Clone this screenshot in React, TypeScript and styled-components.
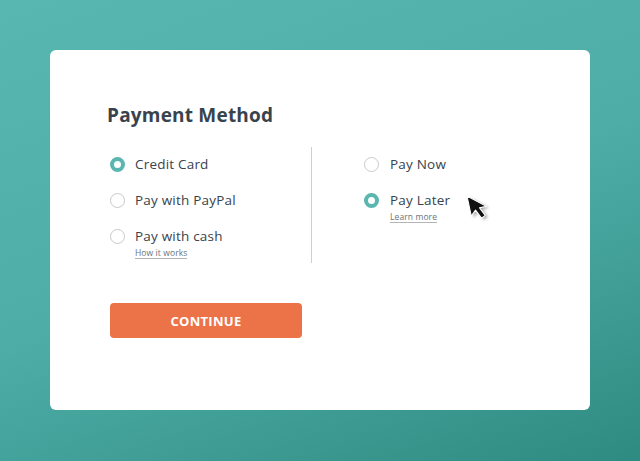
import React from "react";
import styled, { createGlobalStyle } from "styled-components";

const Global = createGlobalStyle`
  html, body { margin: 0; padding: 0; }
  body { font-family: "Open Sans", "Liberation Sans", sans-serif; }
`;

const Page = styled.div`
  width: 640px;
  height: 461px;
  box-sizing: border-box;
  padding: 50px;
  background: linear-gradient(160deg, #58b8b1 0%, #4eaea7 50%, #2e8b82 100%);
`;

const Card = styled.div`
  position: relative;
  width: 540px;
  height: 360px;
  box-sizing: border-box;
  background: #fff;
  border-radius: 6px;
  padding: 52px 0 0 57px;
`;

const Title = styled.h1`
  margin: 0;
  font-size: 19px;
  font-weight: 700;
  color: #38434d;
  line-height: 26px;
  letter-spacing: 0.2px;
`;

const Columns = styled.div`
  display: flex;
  margin-top: 20px;
  margin-left: 3px;
`;

const Column = styled.div<{ $w: number }>`
  width: ${(p) => p.$w}px;
  display: flex;
  flex-direction: column;
  gap: 14px;
  padding-top: 5px;
`;

const Divider = styled.div`
  width: 1px;
  height: 116px;
  margin-top: -1px;
  background: #cfcfcf;
  margin-right: 52px;
`;

const Option = styled.div<{ $gap: number }>`
  display: flex;
  align-items: flex-start;
  gap: ${(p) => p.$gap}px;
`;

const Radio = styled.span<{ $on?: boolean }>`
  box-sizing: border-box;
  width: 15px;
  height: 15px;
  border-radius: 50%;
  margin-top: 4px;
  flex-shrink: 0;
  border: ${(p) => (p.$on ? "4px solid #5ab6ae" : "1px solid #c9c9c9")};
  background: #fff;
`;

const Texts = styled.div`
  display: flex;
  flex-direction: column;
`;

const Label = styled.span`
  font-size: 13.5px;
  color: #38434d;
  line-height: 22px;
  letter-spacing: 0.2px;
`;

const Sub = styled.a`
  font-size: 8.5px;
  color: #6b737a;
  line-height: 10px;
  text-decoration: none;
  border-bottom: 1px solid #b5b5b5;
  align-self: flex-start;
  margin-top: 1px;
  letter-spacing: 0.1px;
`;

const Button = styled.button`
  display: block;
  margin: 40px 0 0 3px;
  width: 192px;
  height: 35px;
  border: none;
  border-radius: 4px;
  background: #ec7248;
  color: #fff;
  font-family: "Open Sans", "Liberation Sans", sans-serif;
  font-weight: 700;
  font-size: 13px;
  letter-spacing: 0.3px;
`;

const Cursor = styled.svg`
  position: absolute;
  left: 413px;
  top: 142px;
`;

export default function App() {
  return (
    <>
      <Global />
      <Page>
        <Card>
          <Title>Payment Method</Title>
          <Columns>
            <Column $w={201}>
              <Option $gap={10}>
                <Radio $on />
                <Texts><Label>Credit Card</Label></Texts>
              </Option>
              <Option $gap={10}>
                <Radio />
                <Texts><Label>Pay with PayPal</Label></Texts>
              </Option>
              <Option $gap={10}>
                <Radio />
                <Texts>
                  <Label>Pay with cash</Label>
                  <Sub>How it works</Sub>
                </Texts>
              </Option>
            </Column>
            <Divider />
            <Column $w={150}>
              <Option $gap={11}>
                <Radio />
                <Texts><Label>Pay Now</Label></Texts>
              </Option>
              <Option $gap={11}>
                <Radio $on />
                <Texts>
                  <Label>Pay Later</Label>
                  <Sub>Learn more</Sub>
                </Texts>
              </Option>
            </Column>
          </Columns>
          <Button>CONTINUE</Button>
          <Cursor width="32" height="34" viewBox="0 0 32 34">
            <defs>
              <filter id="sh" x="-40%" y="-40%" width="180%" height="180%">
                <feGaussianBlur stdDeviation="1.3" />
              </filter>
            </defs>
            <g transform="translate(4 4) rotate(-12) scale(1.2) translate(-3 -3)">
              <path d="M4 4 L4 21 L8.5 17 L12 24.5 L15.5 23 L12.2 15.8 L18 15.8 Z" fill="#000" opacity="0.35" filter="url(#sh)" transform="translate(0.8,0.8)" />
              <path d="M3 3 L3 20 L7.5 16 L11 23.5 L14.5 22 L11.2 14.8 L17 14.8 Z" fill="#111" stroke="#fff" strokeWidth="0.9" strokeLinejoin="round" />
            </g>
          </Cursor>
        </Card>
      </Page>
    </>
  );
}
